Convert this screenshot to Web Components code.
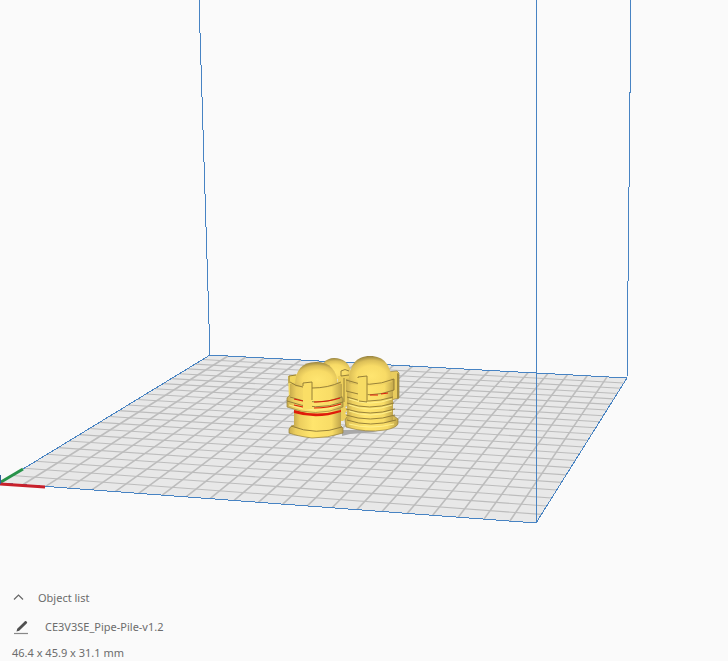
<!DOCTYPE html>
<html lang="en">
<head>
<meta charset="utf-8">
<title>Build plate</title>
<style>
html{height:100%}
body{margin:0;min-height:100%;background:#fafafa;font-family:"Noto Sans","Open Sans",sans-serif;color:#6c6c6c}
</style>
</head>
<body>
<slicer-app></slicer-app>

<template id="t-app">
<style>
:host{display:flex;flex-direction:column;min-height:100%;overflow:hidden}
</style>
<build-volume></build-volume>
<object-panel label="Object list">
  <object-name slot="name">CE3V3SE_Pipe-Pile-v1.2</object-name>
  <span slot="size">46.4 x 45.9 x 31.1 mm</span>
</object-panel>
</template>

<template id="t-volume">
<style>
:host{display:block}
svg{display:block;width:100%;height:auto}
.edge{fill:none;stroke:#4783c3;stroke-width:1;shape-rendering:crispEdges}
.out{stroke:#96813c;stroke-width:.7}
.shade{fill:none;stroke:#8c7734;stroke-width:.9}
.light{fill:none;stroke:#fff08c;stroke-width:1}
.red{fill:none;stroke:#df1b0b;stroke-width:1.1}
</style>
<svg viewBox="0 0 728 584" role="img" aria-label="Pipe pile model on the build plate">
<defs>
<linearGradient id="body"><stop offset="0" stop-color="#c9ad4e"/><stop offset=".12" stop-color="#ecce5e"/><stop offset=".4" stop-color="#ffe56d"/><stop offset=".8" stop-color="#f8dc66"/><stop offset="1" stop-color="#bfa44a"/></linearGradient>
<radialGradient id="dome" cx=".52" cy=".66" r=".68"><stop offset="0" stop-color="#ffe570"/><stop offset=".5" stop-color="#f8db66"/><stop offset=".76" stop-color="#dcbf58"/><stop offset="1" stop-color="#8d7a3c"/></radialGradient>
</defs>
<path fill="#e8e8e8" d="M0 483 536 523 627 378 210 355Z"/>
<path id="deep" fill="none" stroke="#bdbdbd" stroke-width="1.6"/>
<path id="cross" fill="none" stroke="#bcbcbc" stroke-width="1.1"/>
<path class="edge" d="M199 0 210 355 627 378 631 0M0 483 210 355M0 483 536 523 627 378"/>
<path stroke="#28934a" stroke-width="3" d="M1 482 23 469"/>
<path stroke="#c8202b" stroke-width="3" d="M0 484 45 487"/>
<path stroke="#315f96" stroke-width="2" d="M0 475V484"/>

<g id="rear">
<path fill="url(#dome)" d="M318 376C320 364 326 358 334 358C343 358 349 363 351 371V379H318Z"/>
<path fill="#edcf5c" d="M338 376H349V404L345 407 348 410 345 413 348 417 343 421H338Z"/>
<path class="shade" d="M341 371Q345 368 349 371M341 371V376L349 375M344 378V402"/>
</g>
<path fill="#a8a8a8" d="M342 430 368 430 378 432 350 434 342 436Z"/>

<g id="right-pile">
<path fill="#e9cc5d" class="out" d="M387 372 397 371 399 373V398L391 400Z"/>
<path fill="#a28c40" d="M397 373 399 374V398L397 399Z"/>
<path fill="url(#body)" class="out" d="M345 420Q346 417 349 416H394L398 419V424Q396 428 385 430Q366 433 346 427Z"/>
<path fill="url(#body)" d="M347 389H393V421Q370 429 347 421Z"/>
<path class="shade" d="M347 397Q368 405 393 397M347 403Q369 411 394 403M346 409Q370 417 395 409M346 415Q370 423 395 415M347 420Q370 428 396 420"/>
<path class="light" d="M349 399Q370 407 392 399M349 405Q370 413 392 405M349 411Q370 419 392 411M349 424Q370 430 394 424"/>
<path fill="url(#body)" d="M346 379Q369 373 394 379V390Q370 399 346 391Z"/>
<path fill="url(#dome)" d="M349 383C349 365 356 356 370 356S391 365 392 382Q370 390 349 383Z"/>
<path class="shade" d="M346 380Q369 389 394 379M346 391Q370 399 394 390V379"/>
<path class="red" d="M370 395 378 395M381 394 388 393"/>
<path fill="#f7dc64" d="M358 377 367 376 368 402 358 401Z"/>
<path class="shade" d="M358 378V377L367 376 367 402 359 401"/>
</g>

<g id="left-pile">
<path fill="#f0d55d" d="M288 376 298 374V397L289 399Z"/>
<path class="shade" d="M289 383V376L296 375"/>
<path fill="url(#body)" class="out" d="M289 429Q291 425 295 425H340L343 428V433Q328 438 312 438Q297 436 289 433Z"/>
<path fill="url(#body)" d="M294 406H341V427Q318 436 294 427Z"/>
<path class="shade" d="M291 426Q316 436 342 427"/>
<path fill="#df1b0b" d="M294 410Q317 417 341 410V412Q317 420 294 413Z"/>
<path fill="url(#body)" class="out" d="M287 398Q288 396 291 395H341L343 399V407Q316 418 287 407Z"/>
<path class="shade" d="M287 401Q316 412 343 402"/>
<path class="light" d="M289 405Q316 415 341 405"/>
<path fill="url(#body)" d="M290 384Q316 375 342 384V396Q316 406 290 396Z"/>
<path fill="url(#dome)" d="M295 386C295 370 302 362 316 362S337 370 338 385Q316 392 295 386Z"/>
<path class="shade" d="M290 382Q295 386 303 387M312 388Q328 388 341 382M290 397Q316 407 342 397"/>
<path class="red" d="M294 399 303 401M314 402Q328 402 340 398M294 405 303 407M314 408Q328 408 341 404"/>
<path fill="#fade66" d="M303 383 312 382V409L303 410Z"/>
<path class="shade" d="M303 386V383L312 382V400"/>
</g>
<path class="edge" d="M536 0V523"/>
</svg>
</template>

<template id="t-panel">
<style>
:host{display:flex;flex-direction:column;align-items:flex-start;gap:6px;padding:4px 12px 0;font-size:11px;line-height:20px}
button{display:flex;align-items:center;gap:13px;margin:0;padding:0;border:0;background:none;color:inherit;font:inherit;cursor:pointer}
svg{display:block;width:13px;height:12px}
.group{display:flex;flex-direction:column;gap:9px}
</style>
<div class="group">
<button type="button" aria-expanded="true"><svg viewBox="0 0 13 12" aria-hidden="true"><path d="M2 7.500 6.500 3 11 7.500" fill="none" stroke="#666" stroke-width="1.200"/></svg><span id="label"></span></button>
<slot name="name"></slot>
</div>
<div><slot name="size"></slot></div>
</template>

<template id="t-name">
<style>
:host{display:flex;align-items:center;gap:16px;padding-left:2px}
button{display:block;margin:0;padding:0;border:0;background:none;cursor:pointer}
svg{display:block;width:15px;height:16px}
</style>
<button type="button" aria-label="Rename object"><svg viewBox="0 0 15 16" aria-hidden="true"><path d="M0 14.500H14" stroke="#888" stroke-width="1.200"/><path fill="#505050" d="M2.500 12.500 3.200 9.800 9.900 3.200 11.100 2.100Q11.800 1.700 12.500 2.400L12.900 2.800Q13.500 3.600 12.900 4.300L5.200 11.800Z"/></svg></button>
<span><slot></slot></span>
</template>

<script>
class Part extends HTMLElement{
  constructor(){
    super();
    this.attachShadow({mode:"open"}).append(document.getElementById(this.constructor.template).content.cloneNode(true));
  }
}
class BuildVolume extends Part{
  static template="t-volume";
  connectedCallback(){
    // Projective map of the unit square onto the four corners of the plate.
    const [[x0,y0],[x1,y1],[x2,y2],[x3,y3]]=[[0,483],[536,523],[627,378],[210,355]];
    const dx1=x1-x2,dx2=x3-x2,sx=x0-x1+x2-x3,dy1=y1-y2,dy2=y3-y2,sy=y0-y1+y2-y3;
    const det=dx1*dy2-dx2*dy1,g=(sx*dy2-dx2*sy)/det,h=(dx1*sy-sx*dy1)/det;
    const at=(u,v)=>{
      const w=g*u+h*v+1;
      return [((x1-x0+g*x1)*u+(x3-x0+h*x3)*v+x0)/w,((y1-y0+g*y1)*u+(y3-y0+h*y3)*v+y0)/w].map(n=>n.toFixed(2)).join(" ");
    };
    const cells=22;
    let deep="",cross="";
    for(let i=1;i<cells;i++){
      const t=i/cells;
      deep+=`M${at(t,0)}L${at(t,1)}`;
      cross+=`M${at(0,t)}L${at(1,t)}`;
    }
    this.shadowRoot.getElementById("deep").setAttribute("d",deep);
    this.shadowRoot.getElementById("cross").setAttribute("d",cross);
  }
}
class ObjectPanel extends Part{
  static template="t-panel";
  connectedCallback(){this.shadowRoot.getElementById("label").textContent=this.getAttribute("label")}
}
class ObjectName extends Part{static template="t-name"}
class SlicerApp extends Part{static template="t-app"}
customElements.define("object-name",ObjectName);
customElements.define("object-panel",ObjectPanel);
customElements.define("build-volume",BuildVolume);
customElements.define("slicer-app",SlicerApp);
</script>
</body>
</html>
